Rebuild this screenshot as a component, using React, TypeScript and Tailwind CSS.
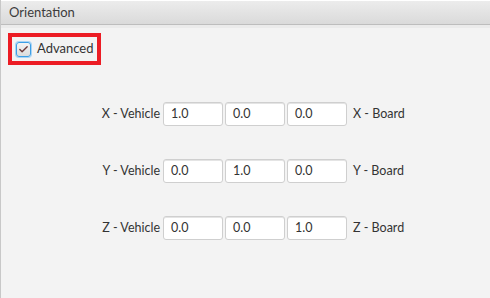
import { Check } from 'lucide-react';

const rows = [
  { axis: 'X', values: ['1.0', '0.0', '0.0'] },
  { axis: 'Y', values: ['0.0', '1.0', '0.0'] },
  { axis: 'Z', values: ['0.0', '0.0', '1.0'] },
];

export default function App() {
  return (
    <div
      className="w-[490px] h-[298px] bg-[#f3f3f3] border-l border-[#c8c8c8] text-[#333] overflow-hidden"
      style={{ fontFamily: 'Lato, "Open Sans", sans-serif' }}
    >
      {/* title bar */}
      <div className="h-[25px] bg-gradient-to-b from-[#ececec] to-[#dadada] border-b border-[#bdbdbd] border-t border-t-white flex items-center pl-[8px] text-[13px] text-[#3c3c3c]">
        Orientation
      </div>
      <div className="h-[3px] bg-[#ebebeb]" />

      {/* advanced checkbox */}
      <div className="ml-[7px] mt-[5px] w-[93px] h-[32px] border-[4px] border-[#ec1c24] flex items-center pl-[4px] gap-[6px]">
        <div className="w-[15px] h-[15px] rounded-[3px] border border-[#3c9fe6] bg-gradient-to-b from-[#f4f4f4] to-[#dcdcdc] flex items-center justify-center shadow-[0_0_0_1px_#a9d4f5]">
          <Check className="w-[11px] h-[11px] text-[#6a3a3a]" strokeWidth={3} />
        </div>
        <span className="text-[13px]">Advanced</span>
      </div>

      {/* matrix */}
      <div className="mt-[37px] flex flex-col gap-[33px] pl-[91px]">
        {rows.map((r) => (
          <div key={r.axis} className="flex items-center h-[24px] text-[12.5px] whitespace-nowrap">
            <span className="w-[71px] shrink-0 text-right pr-[3px]">{r.axis} - Vehicle</span>
            <div className="flex gap-[2px] shrink-0">
              {r.values.map((v, i) => (
                <div
                  key={i}
                  className="w-[60px] h-[24px] bg-white border border-[#cfcfcf] rounded-[3px] flex items-center pl-[7px] shadow-[inset_0_1px_0_#e4e4e4]"
                >
                  {v}
                </div>
              ))}
            </div>
            <span className="pl-[6px]">{r.axis} - Board</span>
          </div>
        ))}
      </div>
    </div>
  );
}
